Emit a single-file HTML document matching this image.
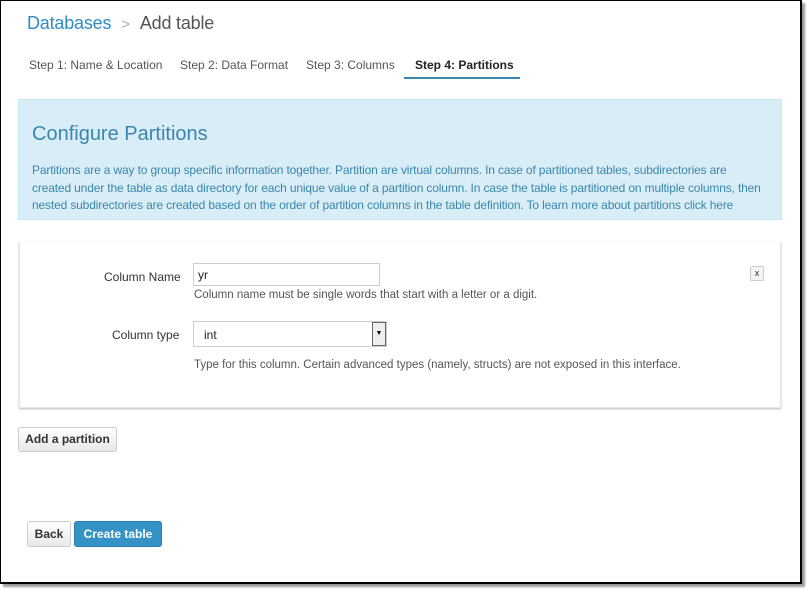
<!DOCTYPE html>
<html><head><style>
*{box-sizing:border-box;margin:0;padding:0}
body{width:810px;height:593px;background:#fff;font-family:"Liberation Sans",Arial,sans-serif;position:relative;overflow:hidden}
.frame{position:absolute;left:0;top:0;width:802px;height:584px;border:1px solid #000;border-right:2px solid #000;border-bottom:2px solid #000;box-shadow:3px 3px 2px #999;background:#fff}
.a{position:absolute}
.crumb{left:27px;top:13px;font-size:18px;color:#2f8bc4;letter-spacing:-0.2px}
.crumb span.sep{color:#aaa;margin:0 10px;font-size:15px}
.crumb span.cur{color:#555}
.tab{top:58px;font-size:12px;color:#555}
.info{left:18px;top:99px;width:764px;height:121px;background:#d9edf7;border:1px solid #c5e6f3;color:#3a87ad;padding:0 13px}
.info h2{font-weight:normal;font-size:20px;margin-top:23px;color:#3a87ad}
.info p{font-size:12px;line-height:17.5px;margin-top:16px;letter-spacing:-0.15px;white-space:nowrap}
.panel{left:19px;top:242px;width:762px;height:166px;border:1px solid #e8e8e8;border-top:none;box-shadow:0 1px 2px #bbb;background:#fff}
.lbl{font-size:12px;color:#333}
.help{font-size:11.5px;color:#555}
.btn{border:1px solid #ccc;border-radius:3px;background:linear-gradient(#fff,#e8e8e8);font-size:12px;font-weight:bold;color:#333;text-align:center}
</style></head><body>
<div class="frame"></div>
<div class="a crumb">Databases<span class="sep">&gt;</span><span class="cur">Add table</span></div>
<div class="a tab" style="left:29px">Step 1: Name &amp; Location</div>
<div class="a tab" style="left:180px">Step 2: Data Format</div>
<div class="a tab" style="left:306px">Step 3: Columns</div>
<div class="a tab" style="left:415px;color:#222;font-weight:bold">Step 4: Partitions</div>
<div class="a" style="left:404px;top:77px;width:116px;height:2px;background:#3a87ad"></div>
<div class="a info"><h2>Configure Partitions</h2><p>Partitions are a way to group specific information together. Partition are virtual columns. In case of partitioned tables, subdirectories are<br>created under the table as data directory for each unique value of a partition column. In case the table is partitioned on multiple columns, then<br>nested subdirectories are created based on the order of partition columns in the table definition. To learn more about partitions click here</p></div>
<div class="a panel"></div>
<div class="a lbl" style="left:104px;top:270px">Column Name</div>
<div class="a" style="left:193px;top:263px;width:187px;height:23px;border:1px solid #ccc;font-size:12px;padding:4px 4px;color:#222">yr</div>
<div class="a help" style="left:194px;top:289px">Column name must be single words that start with a letter or a digit.</div>
<div class="a" style="left:750px;top:266px;width:14px;height:15px;border:1px solid #ccc;border-radius:2px;font-size:9px;text-align:center;line-height:13px;color:#333;background:#f4f4f4">x</div>
<div class="a lbl" style="left:112px;top:328px">Column type</div>
<div class="a" style="left:193px;top:321px;width:194px;height:26px;border:1px solid #ccc;font-size:12px;padding:6px 10px;color:#222">int</div>
<div class="a" style="left:372px;top:322px;width:14px;height:24px;border:1px solid #666;background:#eee;font-size:7px;text-align:center;line-height:22px">▼</div>
<div class="a help" style="left:194px;top:359px">Type for this column. Certain advanced types (namely, structs) are not exposed in this interface.</div>
<div class="a btn" style="left:18px;top:427px;width:99px;height:25px;line-height:23px">Add a partition</div>
<div class="a btn" style="left:27px;top:521px;width:44px;height:26px;line-height:24px">Back</div>
<div class="a" style="left:74px;top:521px;width:88px;height:26px;line-height:24px;border:1px solid #2a7fb0;border-radius:3px;background:#3592c4;color:#fff;font-size:12px;font-weight:bold;text-align:center">Create table</div>
</body></html>
